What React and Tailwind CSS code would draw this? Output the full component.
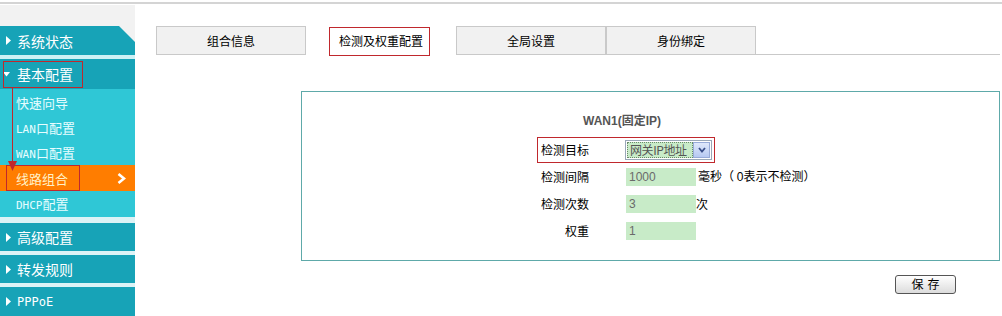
import React from 'react';

const cjk = "font-['Noto_Sans_CJK_SC',sans-serif]";

function RightTri() {
  return (
    <svg width="5" height="9" viewBox="0 0 5 9" className="shrink-0">
      <path d="M0 0 L5 4.5 L0 9 Z" fill="#ffffff" />
    </svg>
  );
}

function DownTri() {
  return (
    <svg width="7" height="5" viewBox="0 0 7 5" className="shrink-0">
      <path d="M0 0 L7 0 L3.5 4.5 Z" fill="#ffffff" />
    </svg>
  );
}

function MainItem({ label, h, mono, open }) {
  return (
    <div className={`${h} bg-[#17a3b7] flex items-center text-white`}>
      <div className={open ? 'ml-[3px] w-[14px]' : 'ml-[6px] w-[11px]'}>
        {open ? <DownTri /> : <RightTri />}
      </div>
      {mono ? (
        <span className="font-['DejaVu_Sans_Mono',monospace] text-[12px]">{label}</span>
      ) : (
        <span className="text-[14px] leading-none">{label}</span>
      )}
    </div>
  );
}

function SubItem({ h, children, active }) {
  return (
    <div
      className={`${h} flex items-center pl-[16px] ${
        active ? 'bg-[#ff7d00] text-[#fff1c6]' : 'bg-[#2fc7d6] text-[#e6fdff]'
      } text-[13px] leading-none`}
    >
      <span className="flex-1">{children}</span>
      {active && (
        <svg width="9" height="11" viewBox="0 0 9 11" className="mr-[9px]">
          <path d="M1.5 1 L7 5.5 L1.5 10" stroke="#ffffff" strokeWidth="2.6" fill="none" />
        </svg>
      )}
    </div>
  );
}

const Latin = ({ children }) => (
  <span className="font-['DejaVu_Sans_Mono',monospace] text-[11px]">{children}</span>
);

function Tab({ label, active }) {
  return active ? (
    <div className="w-[150px] h-[29px] bg-white flex items-center justify-center text-[12px] text-black">
      {label}
    </div>
  ) : (
    <div className="w-[150px] h-[29px] bg-[#f1f1f1] border border-[#c9c9c9] flex items-center justify-center text-[12px] text-black">
      {label}
    </div>
  );
}

function FieldRow({ label, value, suffix }) {
  return (
    <div className="h-[27px] flex items-center">
      <div className="w-[88px] pr-[37px] text-right text-[12px] text-black">{label}</div>
      <div className="w-[70px] h-[18px] bg-[#c8ebc8] text-[#6a6a6a] text-[12px] pl-[3px] flex items-center font-['Liberation_Sans',sans-serif]">
        {value}
      </div>
      {suffix}
    </div>
  );
}

export default function App() {
  return (
    <div className={`relative w-[1002px] h-[316px] overflow-hidden bg-white ${cjk}`}>
      <div className="mt-[2px] h-[2px] bg-[#d4d4d4]" />
      <div className="flex">
        {/* Sidebar */}
        <div className="w-[136px] mt-[1px] pt-[21px] bg-[#f2f2f2] flex flex-col">
          <div className="h-[29px] bg-[#17a3b7] flex items-center text-white [clip-path:polygon(0_0,119px_0,100%_16px,100%_100%,0_100%)]">
            <div className="ml-[6px] w-[11px]">
              <RightTri />
            </div>
            <span className="text-[14px] leading-none">系统状态</span>
          </div>
          <div className="h-[4px] bg-[#cdf1f5]" />
          <MainItem label="基本配置" h="h-[30px]" open />
          <SubItem h="h-[26px]">快速向导</SubItem>
          <SubItem h="h-[25px]">
            <Latin>LAN</Latin>口配置
          </SubItem>
          <SubItem h="h-[25px]">
            <Latin>WAN</Latin>口配置
          </SubItem>
          <SubItem h="h-[26px]" active>
            线路组合
          </SubItem>
          <SubItem h="h-[26px]">
            <Latin>DHCP</Latin>配置
          </SubItem>
          <div className="h-[6px] bg-[#dcf3f6]" />
          <MainItem label="高级配置" h="h-[28px]" />
          <div className="h-[4px] bg-[#dcf3f6]" />
          <MainItem label="转发规则" h="h-[28px]" />
          <div className="h-[4px] bg-[#dcf3f6]" />
          <MainItem label="PPPoE" h="h-[29px]" mono />
        </div>

        {/* Main */}
        <div className="flex-1 pl-[21px] pr-[2px] pt-[22px]">
          <div className="flex">
            <Tab label="组合信息" />
            <Tab label="检测及权重配置" active />
            <Tab label="全局设置" />
            <Tab label="身份绑定" />
            <div className="flex-1 border-b border-[#c9c9c9]" />
          </div>

          <div className="ml-[145px] mt-[36px] w-[699px] h-[170px] border border-[#5ea9a9] pl-[235px] pt-[21px]">
            <div className="w-[170px] text-center text-[12px] leading-[16px] font-bold text-[#555555] font-['Liberation_Sans','Noto_Sans_CJK_SC',sans-serif]">
              WAN1(固定IP)
            </div>
            <div className="mt-[8px] w-[178px] h-[26px] border border-[#c0282d] flex items-center">
              <div className="w-[87px] pr-[36px] text-right text-[12px] text-black">检测目标</div>
              <div className="w-[87px] h-[20px] border border-[#9aa8b8] bg-white flex items-stretch p-[1px]">
                <div className="flex-1 bg-[#c8ebc8] border border-dotted border-[#6a8a6a] text-[12px] tracking-[-0.4px] text-[#555555] flex items-center pl-[2px] leading-none overflow-hidden whitespace-nowrap">
                  网关IP地址
                </div>
                <div className="w-[17px] bg-gradient-to-b from-[#dfe8fb] to-[#b7c9f2] border border-[#98abd8] flex items-center justify-center">
                  <svg width="8" height="6" viewBox="0 0 8 6">
                    <path d="M1 1 L4 4.5 L7 1" stroke="#3a4f8a" strokeWidth="1.8" fill="none" />
                  </svg>
                </div>
              </div>
            </div>
            <div className="pl-[1px]">
              <FieldRow
                label="检测间隔"
                value="1000"
                suffix={<span className="ml-[2px] text-[12px] text-black">毫秒（ <span className="font-['Liberation_Sans',sans-serif]">0</span>表示不检测）</span>}
              />
              <FieldRow label="检测次数" value="3" suffix={<span className="text-[12px] text-black">次</span>} />
              <FieldRow label="权重" value="1" />
            </div>
          </div>

          <div className="mt-[9px] ml-[739px]">
            <button className="w-[61px] h-[19px] border border-[#555555] rounded-[3px] bg-gradient-to-b from-white to-[#dcdcdc] text-[12px] leading-none text-black tracking-[4px] pl-[4px]">
              保存
            </button>
          </div>
        </div>
      </div>

      {/* red annotation marks */}
      <div className="absolute left-[3px] top-[61px] w-[80px] h-[27px] border border-[#c0282d]" />
      <div className="absolute left-[12px] top-[88px] w-[1px] h-[75px] bg-[#c0282d]" />
      <svg className="absolute left-[8px] top-[161px]" width="9" height="10" viewBox="0 0 9 10">
        <path d="M0 0 L9 0 L4.5 10 Z" fill="#c0282d" />
      </svg>
      <div className="absolute left-[6px] top-[165px] w-[74px] h-[26px] border border-[#c0282d]" />
      <div className="absolute left-[329px] top-[27px] w-[101px] h-[29px] border border-[#c0282d]" />
    </div>
  );
}
